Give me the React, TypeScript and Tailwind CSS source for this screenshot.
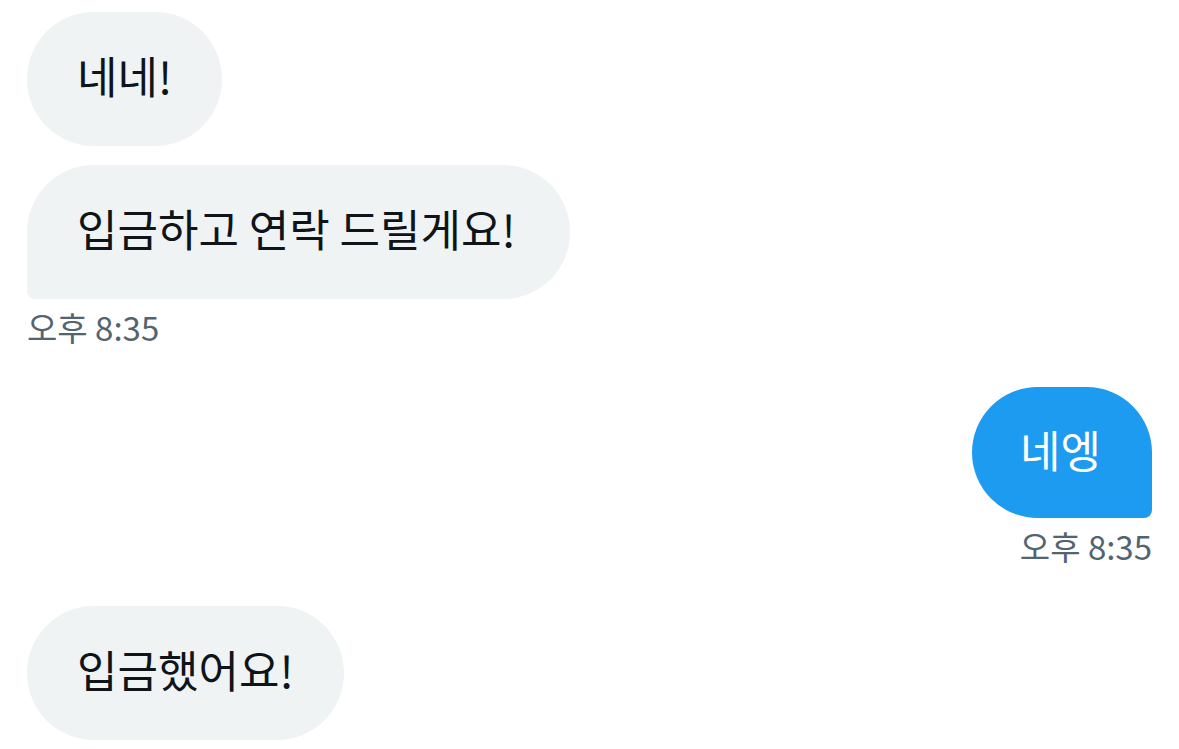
const FONT = '[font-family:"Noto_Sans_CJK_KR","Noto_Sans",sans-serif]';

type Msg = { text: string; mine?: boolean; last?: boolean; time?: string };

const messages: Msg[] = [
  { text: '네네!' },
  { text: '입금하고 연락 드릴게요!', last: true, time: '오후 8:35' },
  { text: '네엥', mine: true, last: true, time: '오후 8:35' },
  { text: '입금했어요!' },
];

function Bubble({ msg }: { msg: Msg }) {
  const shape = msg.mine
    ? msg.last
      ? 'h-[131px] pl-[48px] pr-[51px] rounded-[66px] rounded-br-[8px]'
      : 'h-[131px] pl-[48px] pr-[51px] rounded-[66px]'
    : msg.last
      ? 'h-[134px] pl-[50px] pr-[54px] rounded-[67px] rounded-bl-[8px]'
      : 'h-[134px] pl-[50px] pr-[50px] rounded-[67px]';
  const color = msg.mine ? 'bg-[#1d9bf0] text-white' : 'bg-[#eff3f4] text-[#0f1419]';
  return (
    <div className={`flex flex-col ${msg.mine ? 'items-end' : 'items-start'}`}>
      <div className={`flex items-center pb-[8px] text-[44px] leading-none ${shape} ${color}`}>
        {msg.text}
      </div>
      {msg.time && (
        <div className="mt-[12px] text-[33px] leading-none text-[#536471]">{msg.time}</div>
      )}
    </div>
  );
}

export default function App() {
  return (
    <div className={`w-[1179px] h-[749px] bg-white overflow-hidden ${FONT}`}>
      <div className="pt-[12px] pl-[27px] pr-[27px] flex flex-col">
        <Bubble msg={messages[0]} />
        <div className="mt-[19px]">
          <Bubble msg={messages[1]} />
        </div>
        <div className="mt-[43px]">
          <Bubble msg={messages[2]} />
        </div>
        <div className="mt-[43px]">
          <Bubble msg={messages[3]} />
        </div>
      </div>
    </div>
  );
}
